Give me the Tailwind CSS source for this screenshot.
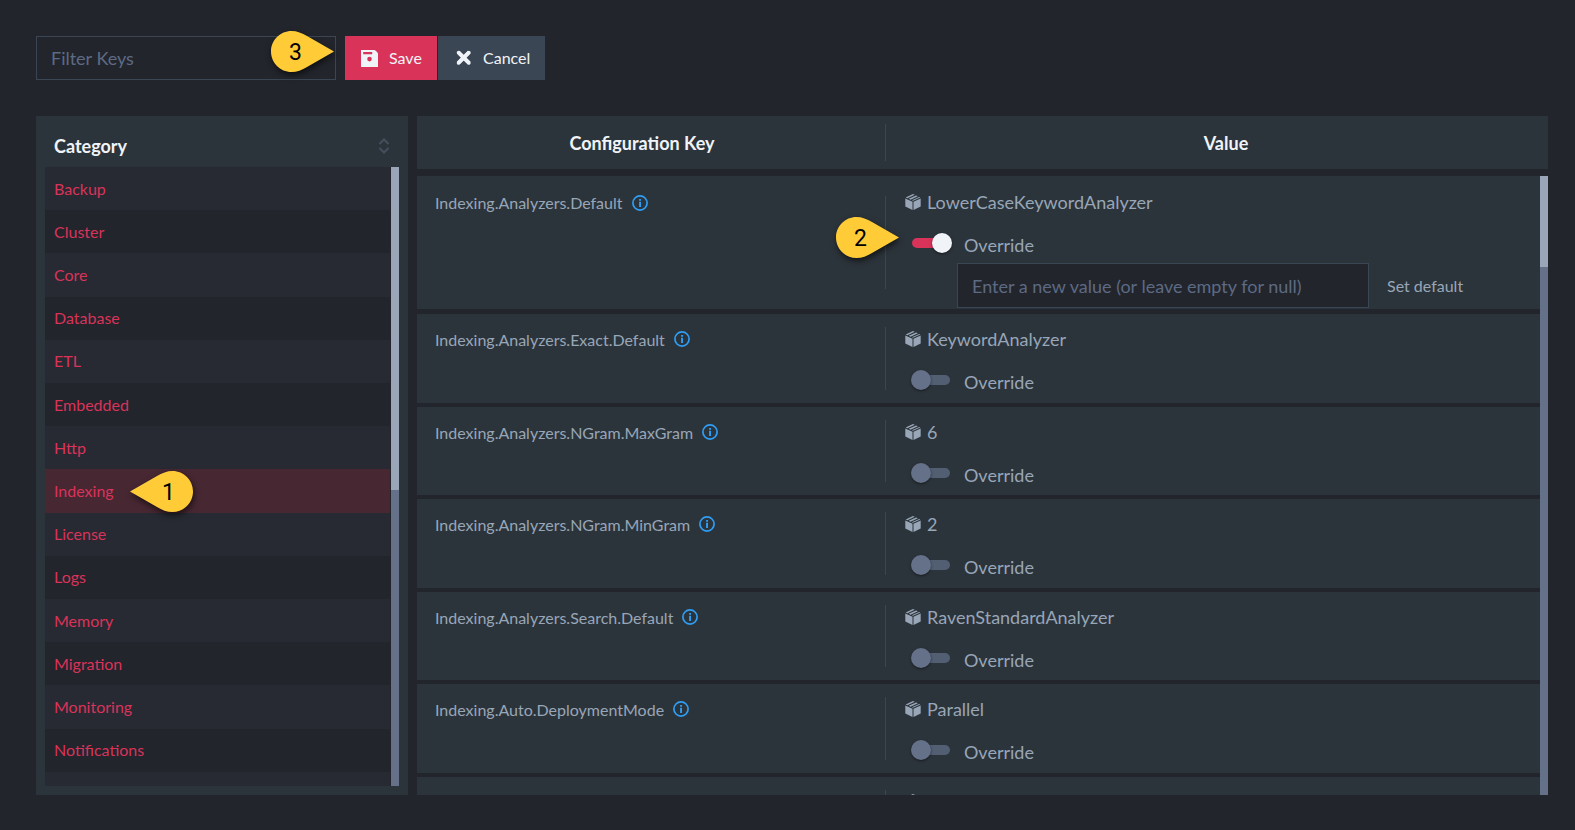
<!DOCTYPE html>
<html lang="en">
<head>
<meta charset="utf-8">
<title>Configuration</title>
<script src="https://cdn.jsdelivr.net/npm/@tailwindcss/browser@4"></script>
</head>
<body class="h-screen overflow-hidden bg-[#22252c] font-['Lato',sans-serif] text-base text-[#98a6b7]">
<svg class="hidden" aria-hidden="true">
  <symbol id="info" viewBox="0 0 16 16"><circle cx="8" cy="8" r="7.1" fill="none" stroke="currentColor" stroke-width="1.7"/><path d="M7.1 4h1.900v1.800H7.100zM7.100 6.800h1.900V12H7.100z" fill="currentColor"/></symbol>
  <symbol id="box" viewBox="0 0 16 16"><path d="M8 0 9.700.8 2.400 4.200.7 3.400zM11 1.400 12.900 2.300 5.600 5.700 3.700 4.800zM14.200 2.900 15.300 3.400 8 6.800 6.900 6.300zM.3 4.400 7.500 7.700V16L.3 12.600zM15.700 4.400 8.500 7.700V16L15.700 12.600z" fill="currentColor"/></symbol>
  <symbol id="pin" viewBox="0 0 63 41"><path d="M20.500 0C9.200 0 0 9.200 0 20.500S9.200 41 20.500 41C26 41 31 39 36 36L63 20.500 36 5C31 2 26 0 20.500 0z" fill="#ffcc38"/></symbol>
</svg>
<main class="flex h-full flex-col pt-9 pr-[27px] pb-[35px] pl-9">
  <form class="mb-9 flex h-11 shrink-0">
    <div class="relative mr-[9px]">
      <input type="text" aria-label="Filter Keys" placeholder="Filter Keys" class="h-11 w-[300px] border border-[#3a4654] bg-transparent px-[14px] text-lg outline-none placeholder:text-[#5d6a84]">
      <div class="absolute -top-[5px] left-[235px] h-[41px] w-[63px]">
        <svg class="absolute inset-0 size-full overflow-visible drop-shadow-[1px_3px_3px_rgba(0,0,0,0.6)]"><use href="#pin"/></svg>
        <span class="absolute inset-y-0 left-0 w-[49px] text-center font-['Roboto',sans-serif] text-[23px] leading-[43px] text-black">3</span>
      </div>
    </div>
    <button type="button" class="mr-px flex w-[92px] items-center gap-[11px] bg-[#d9335a] pl-4 text-[#f0f3f7]">
      <svg class="size-[17px]" viewBox="0 0 17 17"><path fill-rule="evenodd" d="M0 0H13Q14 0 15 1L16 2Q17 3 17 4V17H0zM2.200 2V4.300H11.200V2zM8.500 6.800a2.300 2.300 0 1 0 0 4.600 2.300 2.300 0 0 0 0-4.600z" fill="currentColor"/></svg>
      Save
    </button>
    <button type="button" class="flex w-[107px] items-center gap-[11px] bg-[#3b4654] pl-[18px] text-[#f0f3f7]">
      <svg class="size-4" viewBox="0 0 16 16"><path d="M2.200 2.200 13.200 13.200M13.200 2.200 2.200 13.200" stroke="currentColor" stroke-width="4"/><path d="M2.500 2.500 12.900 12.900M12.900 2.500 2.500 12.900" stroke="currentColor" stroke-width="3.500" stroke-linecap="round"/></svg>
      Cancel
    </button>
  </form>
  <div class="flex min-h-0 flex-1 gap-[9px]">
    <nav class="flex w-[372px] shrink-0 flex-col bg-[#2c343b] px-[9px] pb-[9px]">
      <div class="flex h-[51px] shrink-0 items-center justify-between pt-[9px] pr-[9px] pl-[9px]">
        <h2 class="text-lg font-bold text-[#f0f3f7]">Category</h2>
        <svg class="h-4 w-3" viewBox="0 0 12 16" fill="none" stroke="#454f5c" stroke-width="2"><path d="M1.500 6 6 1.500 10.500 6M1.500 10 6 14.500 10.500 10"/></svg>
      </div>
      <div class="flex min-h-0 flex-1 bg-[#22252c]">
        <div class="mr-px min-w-0 flex-1 overflow-hidden">
          <ul id="categories" class="grid h-[648px] auto-rows-fr"></ul>
        </div>
        <div class="w-2 bg-[#657089]"><div class="h-[323px] bg-[#98a6b7]"></div></div>
      </div>
    </nav>
    <section class="flex min-w-0 flex-1 flex-col">
      <header class="mb-[7px] flex h-[53px] shrink-0 bg-[#2c343b] py-2 text-lg font-bold text-[#f0f3f7]">
        <h2 class="flex w-[469px] shrink-0 items-center justify-center border-r border-[#3a4654] pr-[18px]">Configuration Key</h2>
        <h2 class="flex flex-1 items-center justify-center pl-[18px]">Value</h2>
      </header>
      <div class="flex min-h-0 flex-1">
        <div class="min-w-0 flex-1 overflow-hidden">
          <article class="mb-[5px] flex h-[133px] bg-[#2c343b]">
            <div class="my-5 flex w-[469px] shrink-0 items-start gap-[9px] border-r border-[#3a4654] pl-[18px]">
              <span class="-mt-[5px]">Indexing.Analyzers.Default</span>
              <button type="button" aria-label="Info" class="-mt-px text-[#2f9ef4]"><svg class="size-4"><use href="#info"/></svg></button>
            </div>
            <div class="min-w-0 flex-1 pl-[19px]">
              <div class="mt-3 flex h-7 items-center gap-1.5 text-lg"><svg class="size-4"><use href="#box"/></svg>LowerCaseKeywordAnalyzer</div>
              <label class="mt-[15px] flex h-7 w-fit items-center gap-3 pl-1.5 text-lg">
                <span class="relative -mt-1 flex h-5 w-[41px] items-center">
                  <input type="checkbox" checked class="peer absolute inset-0 size-full appearance-none">
                  <span class="pointer-events-none ml-px h-2.5 w-8 rounded-full bg-[#d9335a]"></span>
                  <span class="pointer-events-none absolute right-0 size-5 rounded-full bg-[#f0f3f7] shadow-sm shadow-black/40"></span>
                </span>
                Override
              </label>
              <div class="mt-1 flex items-center pl-[52px]">
                <input type="text" aria-label="New value" placeholder="Enter a new value (or leave empty for null)" class="h-[45px] w-[412px] border border-[#3a4654] bg-[#22252c] px-[14px] text-lg outline-none placeholder:text-[#5d6a84]">
                <button type="button" class="pl-[18px]">Set default</button>
              </div>
            </div>
          </article>
          <div id="settings" class="grid h-[551px] auto-rows-fr gap-1"></div>
        </div>
        <div class="w-2 bg-[#657089]"><div class="h-[91px] bg-[#98a6b7]"></div></div>
      </div>
    </section>
  </div>
</main>
<div class="absolute top-[471px] left-[130px] h-[41px] w-[63px]">
  <svg class="absolute inset-0 size-full overflow-visible drop-shadow-[1px_3px_3px_rgba(0,0,0,0.6)]"><use href="#pin" transform="translate(63 0) scale(-1 1)"/></svg>
  <span class="absolute inset-y-0 right-0 w-[49px] text-center font-['Roboto',sans-serif] text-[23px] leading-[43px] text-black">1</span>
</div>
<div class="absolute top-[217px] left-[836px] h-[41px] w-[63px]">
  <svg class="absolute inset-0 size-full overflow-visible drop-shadow-[1px_3px_3px_rgba(0,0,0,0.6)]"><use href="#pin"/></svg>
  <span class="absolute inset-y-0 left-0 w-[49px] text-center font-['Roboto',sans-serif] text-[23px] leading-[43px] text-black">2</span>
</div>
<script>
const categories = ['Backup','Cluster','Core','Database','ETL','Embedded','Http','Indexing','License','Logs','Memory','Migration','Monitoring','Notifications',''];
document.getElementById('categories').innerHTML = categories.map((name, i) => {
  const bg = name === 'Indexing' ? 'bg-[#472732]' : i % 2 ? 'bg-[#22252c]' : 'bg-[#272a32]';
  return `<li class="${bg}">${name && `<a href="#" class="flex h-full items-center pl-[9px] text-[#d9335a]">${name}</a>`}</li>`;
}).join('');
const settings = [
  ['Indexing.Analyzers.Exact.Default', 'KeywordAnalyzer'],
  ['Indexing.Analyzers.NGram.MaxGram', '6'],
  ['Indexing.Analyzers.NGram.MinGram', '2'],
  ['Indexing.Analyzers.Search.Default', 'RavenStandardAnalyzer'],
  ['Indexing.Auto.DeploymentMode', 'Parallel'],
  ['', ''],
];
const info = `<button type="button" aria-label="Info" class="mt-1 text-[#2f9ef4]"><svg class="size-4"><use href="#info"/></svg></button>`;
const toggle = `
      <label class="mt-[15px] flex h-7 w-fit items-center gap-[13px] pl-1.5 text-lg">
        <span class="relative -mt-1 flex h-5 w-10 items-center">
          <input type="checkbox" class="absolute inset-0 size-full appearance-none">
          <span class="pointer-events-none ml-[7px] h-2.5 w-8 rounded-full bg-[#525e72]"></span>
          <span class="pointer-events-none absolute left-0 size-5 rounded-full bg-[#657089] shadow-sm shadow-black/40"></span>
        </span>
        Override
      </label>`;
document.getElementById('settings').innerHTML = settings.map(([key, value]) => `
  <article class="flex bg-[#2c343b]">
    <div class="my-[13px] flex w-[469px] shrink-0 items-start gap-[9px] border-r border-[#3a4654] pl-[18px]">
      <span class="mt-px">${key}</span>
      ${key && info}
    </div>
    <div class="min-w-0 flex-1 pl-[19px]">
      <div class="mt-[11px] flex h-7 items-center gap-1.5 text-lg"><svg class="size-4"><use href="#box"/></svg>${value}</div>
      ${key && toggle}
    </div>
  </article>`).join('');
</script>
</body>
</html>
